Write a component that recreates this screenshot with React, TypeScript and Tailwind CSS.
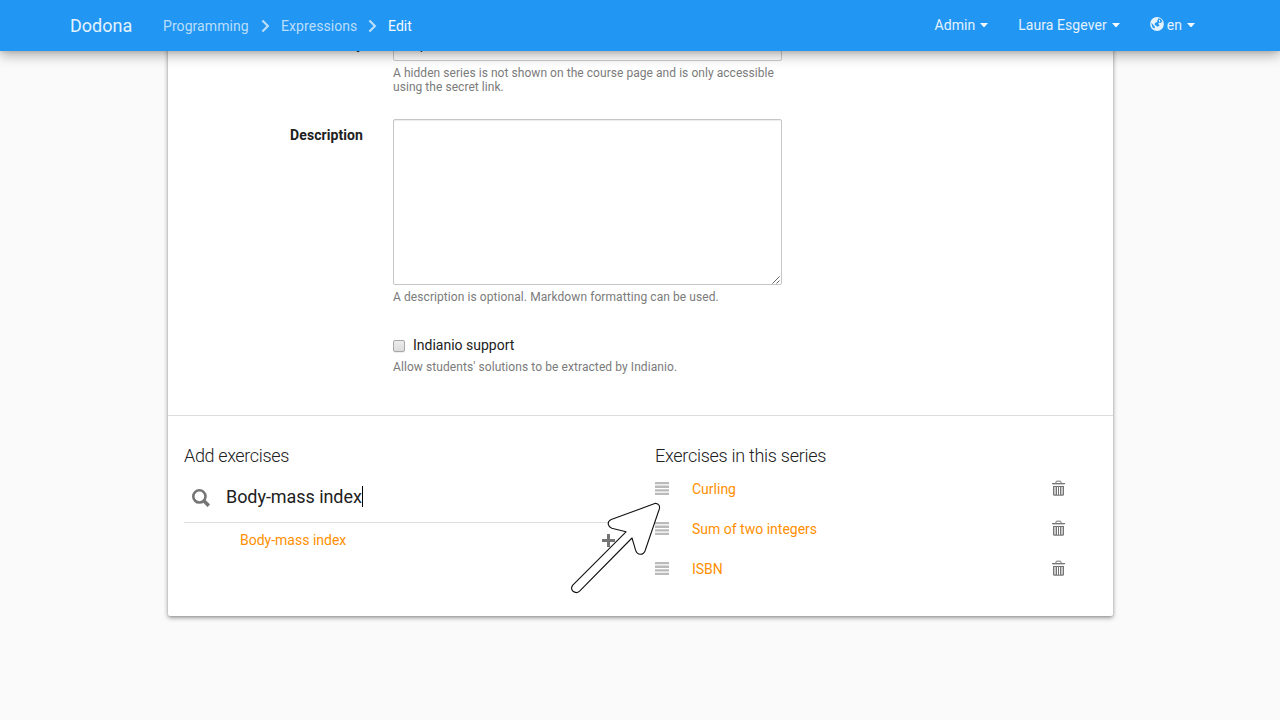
import React from "react";

const Chevron = () => (
  <svg className="mt-px block h-[14px] w-[9px]" viewBox="0 0 9 14" fill="none" stroke="#bbdefb" strokeWidth="2.2">
    <path d="M1.4 1.4 L6.9 7 L1.4 12.6" />
  </svg>
);

const Caret = () => (
  <svg className="ml-[5px] inline-block h-1 w-2 align-[3px]" viewBox="0 0 8 4" fill="#f4faff">
    <path d="M0 0h8L4.5 4h-1z" />
  </svg>
);

const Globe = () => (
  <svg className="mr-[3px] inline-block h-[14px] w-[14px] align-[-1px]" viewBox="0 0 14 14">
    <circle cx="7" cy="7" r="6.9" fill="#e3f2fd" />
    <path
      fill="#2196f3"
      d="M8 1.2 L10.8 2.1 L12.3 4 L11.6 5.2 L11 6 L10 5.6 L8.6 6 L8.2 7.2 L9.6 8 L9 9 L7.4 9.8 L6.6 9 L4.8 8 L4.7 6.4 L6.4 5.2 L7.6 4.6 L7 3.6 L8.2 2.8 Z"
    />
    <path fill="#2196f3" d="M1.2 5.8 L3.4 8 L4.8 9.8 L4.8 11.6 L2.6 10.4 Z" />
    <path fill="#e3f2fd" d="M8.8 3 L10 2.8 L10.4 4.4 L9.2 5 Z" />
  </svg>
);

const Search = () => (
  <svg className="mt-[2px] block h-[18px] w-[18px]" viewBox="0 0 18 18" fill="none" stroke="#757575">
    <circle cx="7.4" cy="7.4" r="6.1" strokeWidth="2.6" />
    <path d="M11.6 11.6 L16.8 16.8" strokeWidth="3.6" />
  </svg>
);

const Plus = () => (
  <svg className="block h-[13px] w-[13px]" viewBox="0 0 13 13" fill="#757575" shapeRendering="crispEdges">
    <path d="M5 0h3v5h5v3H8v5H5V8H0V5h5z" />
  </svg>
);

const Handle = () => (
  <svg className="block h-[13px] w-[14px]" viewBox="0 0 14 13" fill="#bababa">
    <path d="M0 0h14v2.3H0zM0 3.6h14v2.3H0zM0 7.2h14v2.3H0zM0 10.7h14V13H0z" />
  </svg>
);

const Trash = () => (
  <svg className="block h-[16px] w-[13px]" viewBox="0 0 13 16">
    <path fill="none" stroke="#757575" d="M4 3.5 V1.9 Q4 1.2 4.6 1.2 H8.4 Q9 1.2 9 1.9 V3.5" />
    <path fill="#757575" d="M0 3h13v1.1H0z" />
    <path fill="#ccc" d="M0.5 4.1h12v1h-12z" />
    <path fill="#c8c8c8" d="M1 6h11v9H1z" />
    <path fill="#757575" d="M1 5.9h11v1H1zM1 6h1v9H1zM11 6h1v9h-1zM1.5 14.6h10v1.2h-10zM4 6.5h1v8H4zM6 6.5h1v8H6zM8 6.5h1v8H8z" />
    <path fill="#fff" d="M5 7h1v7.5H5zM7 7h1v7.5H7z" />
  </svg>
);

const Help = ({ children }: { children: React.ReactNode }) => (
  <p className="text-[12px] leading-[14px] text-[#7b7b7b]">{children}</p>
);

export default function App() {
  return (
    <div className="h-[720px] overflow-hidden bg-[#fafafa] font-[Roboto,sans-serif] text-[14px] leading-5 text-[#212121]">
      <header className="relative z-10 flex h-[51px] items-center bg-[#2196f3] pl-[70px] pr-[85px] text-[#e3f2fd] shadow-[0_0_4px_rgba(0,0,0,0.14),0_4px_12px_rgba(0,0,0,0.32)]">
        <a className="w-[93px] text-[18px]">Dodona</a>
        <nav className="flex items-center tracking-[0.07px] text-[#bbdefb]">
          <a className="w-[98px]">Programming</a>
          <Chevron />
          <a className="ml-[11px] w-[87px]">Expressions</a>
          <Chevron />
          <a className="ml-[11px] text-[#f4faff]">Edit</a>
        </nav>
        <nav className="ml-auto flex gap-[30px] pb-[2px] tracking-[0.06px]">
          <a>Admin<Caret /></a>
          <a>Laura Esgever<Caret /></a>
          <a><Globe />en<Caret /></a>
        </nav>
      </header>

      <main className="-mt-[31px] ml-[168px] h-[596px] w-[945px] rounded-[2px] bg-white pt-[7px] shadow-[0_2px_5px_rgba(0,0,0,0.32),0_1px_3px_rgba(0,0,0,0.18)]">
        <form className="grid grid-cols-[195px_389px] gap-x-[30px]">
          <label className="pt-[7px] text-right font-bold">Visibility</label>
          <div className="h-[92px] tracking-[0.05px]">
            <div className="mb-[5px] h-[34px] rounded-[2px] border border-[#ccc] py-[6px] pl-4 shadow-[inset_0_1px_1px_rgba(0,0,0,0.075)]">Open</div>
            <Help>A hidden series is not shown on the course page and is only accessible using the secret link.</Help>
          </div>
          <label className="pt-[6px] text-right font-bold tracking-[0.08px]">Description</label>
          <div className="h-[216px] tracking-[0.08px]">
            <div className="mb-[5px] flex h-[166px] items-end justify-end rounded-[2px] border border-[#c6c6c6] shadow-[inset_0_1px_1px_rgba(0,0,0,0.075)]">
              <svg className="mr-px h-2 w-2" viewBox="0 0 8 8" stroke="#555" strokeWidth="0.9">
                <path d="M0.5 7.5L7.5 0.5M4.5 7.5L7.5 4.5" />
              </svg>
            </div>
            <Help>A description is optional. Markdown formatting can be used.</Help>
          </div>
          <div className="col-start-2 h-[80px]">
            <div className="mb-[5px] flex items-center">
              <span className="mr-2 mt-[2px] h-3 w-3 rounded-[2px] border border-[#a8a8a8] bg-gradient-to-b from-[#ededed] to-[#dcdcdc] shadow-[0_1px_0_#eee]" />
              Indianio support
            </div>
            <div className="tracking-[0.08px]">
              <Help>Allow students' solutions to be extracted by Indianio.</Help>
            </div>
          </div>
        </form>

        <div className="flex border-t border-[#ddd] px-4 pt-[30px]">
          <section className="w-[431px]">
            <h4 className="text-[18px] font-light tracking-[-0.36px]">Add exercises</h4>
            <div className="mt-[5px] flex h-[52px] items-center border-b border-[#ddd] pl-2">
              <Search />
              <span className="ml-4 border-r border-black text-[18px] leading-[21px] tracking-[-0.06px]">Body-mass index</span>
            </div>
            <div className="flex h-[34px] items-center pl-14 text-[#ff8f00]">
              <span className="flex-1">Body-mass index</span>
              <Plus />
            </div>
          </section>
          <section className="ml-10 w-[410px]">
            <h4 className="text-[18px] font-light tracking-[-0.28px]">Exercises in this series</h4>
            <ul className="mt-[13px]">
              {["Curling", "Sum of two integers", "ISBN"].map((name) => (
                <li key={name} className="flex h-10 items-start text-[#ff8f00]">
                  <span className="pt-[3px]"><Handle /></span>
                  <span className="ml-[23px] flex-1">{name}</span>
                  <span className="pt-px"><Trash /></span>
                </li>
              ))}
            </ul>
          </section>
        </div>
      </main>

      <svg className="absolute left-[565px] top-[495px] z-20 h-[105px] w-[105px]" viewBox="565 495 105 105" fill="white" stroke="#111" strokeWidth="1.1" strokeLinejoin="round">
        <path d="M655.5 503.3 L611.2 519.6 Q608 521.2 608.2 524.2 Q608.8 527.2 611.8 528.3 L626 531.8 L572.8 585.2 Q570.2 588.6 573 591.3 Q576.4 593.9 579.6 591.2 L632 538 L635.6 550.2 Q636.8 554.2 640.2 554.3 Q643.6 554.4 645 551 L659.3 509 Q660.6 504.4 655.5 503.3 Z" />
      </svg>
    </div>
  );
}
